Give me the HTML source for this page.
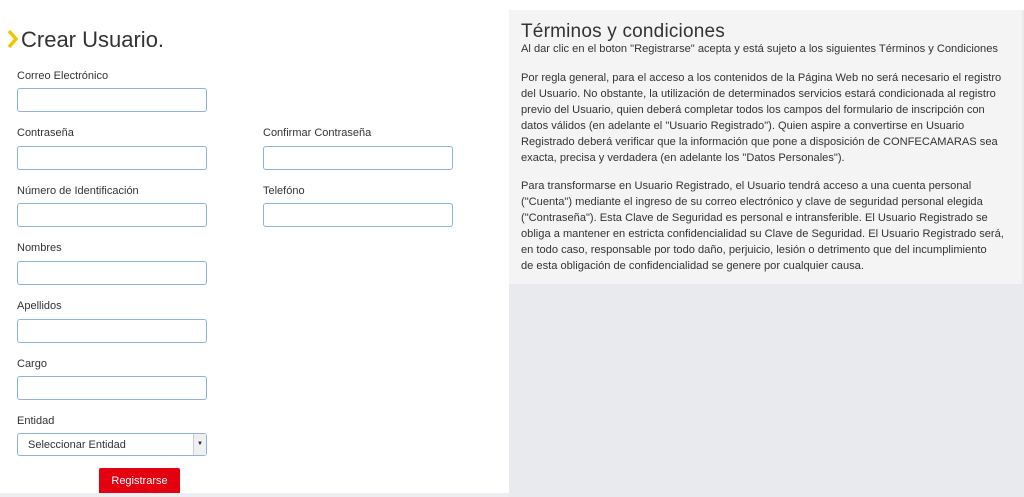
<!DOCTYPE html>
<html><head><meta charset="utf-8"><style>
*{margin:0;padding:0;box-sizing:border-box}
body{width:1024px;height:497px;background:#fff;font-family:"Liberation Sans",sans-serif;position:relative;overflow:hidden;color:#333}
.bgR{position:absolute;left:509px;top:10px;width:515px;height:487px;background:#e9eaee}
.box{position:absolute;left:509px;top:10px;width:513px;height:274px;background:#f4f4f4;padding:0 12px}
.box h2{font-weight:normal;font-size:19px;color:#333;position:absolute;left:12px;top:11px;letter-spacing:0.2px}
.box p{position:absolute;left:12px;font-size:11.1px;line-height:16.1px;color:#333;white-space:nowrap}
.lbl{position:absolute;font-size:11px;color:#333}
.in{position:absolute;width:190px;height:24px;border:1px solid #8fb3d6;border-radius:3px;background:#fff}
.bottom{position:absolute;left:0;top:493px;width:509px;height:4px;background:#eceef1}
</style></head><body>
<div class="bgR"></div>
<div class="box">
<h2>Términos y condiciones</h2>
<p style="top:31px">Al dar clic en el boton "Registrarse" acepta y está sujeto a los siguientes Términos y Condiciones</p>
<p style="top:60px">Por regla general, para el acceso a los contenidos de la Página Web no será necesario el registro<br>del Usuario. No obstante, la utilización de determinados servicios estará condicionada al registro<br>previo del Usuario, quien deberá completar todos los campos del formulario de inscripción con<br>datos válidos (en adelante el "Usuario Registrado"). Quien aspire a convertirse en Usuario<br>Registrado deberá verificar que la información que pone a disposición de CONFECAMARAS sea<br>exacta, precisa y verdadera (en adelante los "Datos Personales").</p>
<p style="top:168px">Para transformarse en Usuario Registrado, el Usuario tendrá acceso a una cuenta personal<br>("Cuenta") mediante el ingreso de su correo electrónico y clave de seguridad personal elegida<br>("Contraseña"). Esta Clave de Seguridad es personal e intransferible. El Usuario Registrado se<br>obliga a mantener en estricta confidencialidad su Clave de Seguridad. El Usuario Registrado será,<br>en todo caso, responsable por todo daño, perjuicio, lesión o detrimento que del incumplimiento<br>de esta obligación de confidencialidad se genere por cualquier causa.</p>
</div>

<svg style="position:absolute;left:6px;top:29px" width="14" height="20"><path d="M3 2 L10 10 L3 18" fill="none" stroke="#f5c400" stroke-width="3.5"/></svg>
<div style="position:absolute;left:21px;top:27px;font-size:22px;color:#333">Crear Usuario.</div>

<div class="lbl" style="left:17px;top:70px">Correo Electrónico</div>
<div class="in" style="left:17px;top:88px"></div>
<div class="lbl" style="left:17px;top:127px">Contraseña</div>
<div class="in" style="left:17px;top:146px"></div>
<div class="lbl" style="left:263px;top:127px">Confirmar Contraseña</div>
<div class="in" style="left:263px;top:146px"></div>
<div class="lbl" style="left:17px;top:185px">Número de Identificación</div>
<div class="in" style="left:17px;top:203px"></div>
<div class="lbl" style="left:263px;top:185px">Telefóno</div>
<div class="in" style="left:263px;top:203px"></div>
<div class="lbl" style="left:17px;top:242px">Nombres</div>
<div class="in" style="left:17px;top:261px"></div>
<div class="lbl" style="left:17px;top:300px">Apellidos</div>
<div class="in" style="left:17px;top:319px"></div>
<div class="lbl" style="left:17px;top:358px">Cargo</div>
<div class="in" style="left:17px;top:376px"></div>
<div class="lbl" style="left:17px;top:415px">Entidad</div>
<div class="in" style="left:17px;top:433px;height:23px">
<span style="position:absolute;left:10px;top:5px;font-size:11px;color:#333">Seleccionar Entidad</span>
<span style="position:absolute;right:0;top:0;width:13px;height:21px;border-left:1px solid #ccc;background:#f0f0f0;font-size:6px;text-align:center;line-height:21px;color:#222">▼</span>
</div>
<div style="position:absolute;left:99px;top:468px;width:81px;height:27px;background:#e3000f;border-radius:2px;color:#fff;font-size:11px;text-align:center;line-height:27px">Registrarse</div>
<div class="bottom"></div>
</body></html>
